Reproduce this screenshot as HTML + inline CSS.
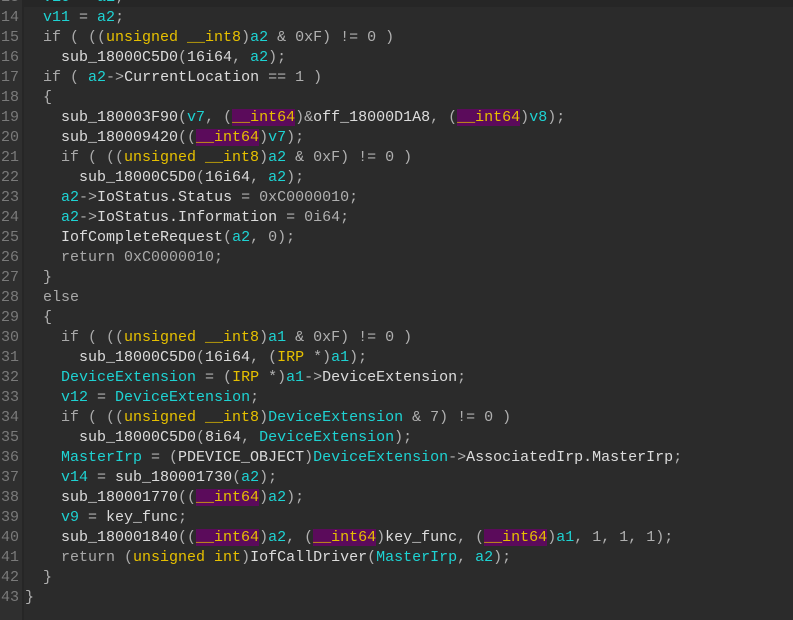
<!DOCTYPE html>
<html><head><meta charset="utf-8"><style>
html,body{margin:0;padding:0;width:793px;height:620px;overflow:hidden;background:#2b2b2b;}
#g{position:absolute;left:0;top:0;width:22px;height:620px;background:#2f2f2f;}
#s{position:absolute;left:22px;top:0;width:2px;height:620px;background:#262626;}
#top{position:absolute;left:24px;top:0;width:769px;height:7px;background:#262626;}
.l{position:absolute;left:0;height:20px;line-height:20px;font-family:"Liberation Mono",monospace;font-size:15px;white-space:pre;color:#dcdcdc;}
.n{position:absolute;left:0;width:19px;text-align:right;color:#7a7a7a;font-family:"Liberation Mono",monospace;font-size:15px;line-height:20px;}
.c{position:absolute;left:25px;}
.k{color:#a9a9a9}.v{color:#1ed3d3}.t{color:#e6c000}.h{background:#5b0b5b;color:#e6c000}.p{color:#b0b0b0}
</style></head><body>
<div id="g"></div><div id="s"></div><div id="top"></div>
<div class="l" style="top:-12px"><span class="n">13</span><span class="c">  <span class="v">v10</span><span class="p"> = </span><span class="v">a1</span><span class="p">;</span></span></div>
<div class="l" style="top:8px"><span class="n">14</span><span class="c">  <span class="v">v11</span><span class="p"> = </span><span class="v">a2</span><span class="p">;</span></span></div>
<div class="l" style="top:28px"><span class="n">15</span><span class="c">  <span class="k">if ( ((</span><span class="t">unsigned __int8</span><span class="p">)</span><span class="v">a2</span><span class="p"> &amp; 0xF) != 0 )</span></span></div>
<div class="l" style="top:48px"><span class="n">16</span><span class="c">    sub_18000C5D0<span class="p">(</span>16i64<span class="p">, </span><span class="v">a2</span><span class="p">);</span></span></div>
<div class="l" style="top:68px"><span class="n">17</span><span class="c">  <span class="k">if ( </span><span class="v">a2</span><span class="p">-&gt;</span>CurrentLocation<span class="p"> == 1 )</span></span></div>
<div class="l" style="top:88px"><span class="n">18</span><span class="c">  <span class="p">{</span></span></div>
<div class="l" style="top:108px"><span class="n">19</span><span class="c">    sub_180003F90<span class="p">(</span><span class="v">v7</span><span class="p">, (</span><span class="h">__int64</span><span class="p">)&amp;</span>off_18000D1A8<span class="p">, (</span><span class="h">__int64</span><span class="p">)</span><span class="v">v8</span><span class="p">);</span></span></div>
<div class="l" style="top:128px"><span class="n">20</span><span class="c">    sub_180009420<span class="p">((</span><span class="h">__int64</span><span class="p">)</span><span class="v">v7</span><span class="p">);</span></span></div>
<div class="l" style="top:148px"><span class="n">21</span><span class="c">    <span class="k">if ( ((</span><span class="t">unsigned __int8</span><span class="p">)</span><span class="v">a2</span><span class="p"> &amp; 0xF) != 0 )</span></span></div>
<div class="l" style="top:168px"><span class="n">22</span><span class="c">      sub_18000C5D0<span class="p">(</span>16i64<span class="p">, </span><span class="v">a2</span><span class="p">);</span></span></div>
<div class="l" style="top:188px"><span class="n">23</span><span class="c">    <span class="v">a2</span><span class="p">-&gt;</span>IoStatus.Status<span class="p"> = 0xC0000010;</span></span></div>
<div class="l" style="top:208px"><span class="n">24</span><span class="c">    <span class="v">a2</span><span class="p">-&gt;</span>IoStatus.Information<span class="p"> = 0i64;</span></span></div>
<div class="l" style="top:228px"><span class="n">25</span><span class="c">    IofCompleteRequest<span class="p">(</span><span class="v">a2</span><span class="p">, 0);</span></span></div>
<div class="l" style="top:248px"><span class="n">26</span><span class="c">    <span class="k">return 0xC0000010;</span></span></div>
<div class="l" style="top:268px"><span class="n">27</span><span class="c">  <span class="p">}</span></span></div>
<div class="l" style="top:288px"><span class="n">28</span><span class="c">  <span class="k">else</span></span></div>
<div class="l" style="top:308px"><span class="n">29</span><span class="c">  <span class="p">{</span></span></div>
<div class="l" style="top:328px"><span class="n">30</span><span class="c">    <span class="k">if ( ((</span><span class="t">unsigned __int8</span><span class="p">)</span><span class="v">a1</span><span class="p"> &amp; 0xF) != 0 )</span></span></div>
<div class="l" style="top:348px"><span class="n">31</span><span class="c">      sub_18000C5D0<span class="p">(</span>16i64<span class="p">, (</span><span class="t">IRP</span><span class="p"> *)</span><span class="v">a1</span><span class="p">);</span></span></div>
<div class="l" style="top:368px"><span class="n">32</span><span class="c">    <span class="v">DeviceExtension</span><span class="p"> = (</span><span class="t">IRP</span><span class="p"> *)</span><span class="v">a1</span><span class="p">-&gt;</span>DeviceExtension<span class="p">;</span></span></div>
<div class="l" style="top:388px"><span class="n">33</span><span class="c">    <span class="v">v12</span><span class="p"> = </span><span class="v">DeviceExtension</span><span class="p">;</span></span></div>
<div class="l" style="top:408px"><span class="n">34</span><span class="c">    <span class="k">if ( ((</span><span class="t">unsigned __int8</span><span class="p">)</span><span class="v">DeviceExtension</span><span class="p"> &amp; 7) != 0 )</span></span></div>
<div class="l" style="top:428px"><span class="n">35</span><span class="c">      sub_18000C5D0<span class="p">(</span>8i64<span class="p">, </span><span class="v">DeviceExtension</span><span class="p">);</span></span></div>
<div class="l" style="top:448px"><span class="n">36</span><span class="c">    <span class="v">MasterIrp</span><span class="p"> = (</span>PDEVICE_OBJECT<span class="p">)</span><span class="v">DeviceExtension</span><span class="p">-&gt;</span>AssociatedIrp.MasterIrp<span class="p">;</span></span></div>
<div class="l" style="top:468px"><span class="n">37</span><span class="c">    <span class="v">v14</span><span class="p"> = </span>sub_180001730<span class="p">(</span><span class="v">a2</span><span class="p">);</span></span></div>
<div class="l" style="top:488px"><span class="n">38</span><span class="c">    sub_180001770<span class="p">((</span><span class="h">__int64</span><span class="p">)</span><span class="v">a2</span><span class="p">);</span></span></div>
<div class="l" style="top:508px"><span class="n">39</span><span class="c">    <span class="v">v9</span><span class="p"> = </span>key_func<span class="p">;</span></span></div>
<div class="l" style="top:528px"><span class="n">40</span><span class="c">    sub_180001840<span class="p">((</span><span class="h">__int64</span><span class="p">)</span><span class="v">a2</span><span class="p">, (</span><span class="h">__int64</span><span class="p">)</span>key_func<span class="p">, (</span><span class="h">__int64</span><span class="p">)</span><span class="v">a1</span><span class="p">, 1, 1, 1);</span></span></div>
<div class="l" style="top:548px"><span class="n">41</span><span class="c">    <span class="k">return (</span><span class="t">unsigned int</span><span class="p">)</span>IofCallDriver<span class="p">(</span><span class="v">MasterIrp</span><span class="p">, </span><span class="v">a2</span><span class="p">);</span></span></div>
<div class="l" style="top:568px"><span class="n">42</span><span class="c">  <span class="p">}</span></span></div>
<div class="l" style="top:588px"><span class="n">43</span><span class="c"><span class="p">}</span></span></div>
</body></html>
